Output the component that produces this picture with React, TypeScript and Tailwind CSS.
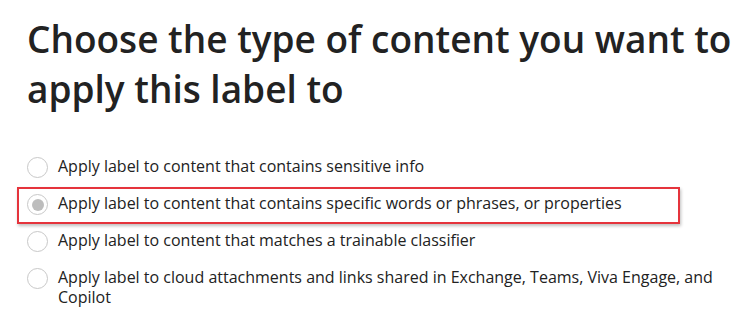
const options = [
  { label: 'Apply label to content that contains sensitive info', checked: false },
  { label: 'Apply label to content that contains specific words or phrases, or properties', checked: true },
  { label: 'Apply label to content that matches a trainable classifier', checked: false },
  {
    label: 'Apply label to cloud attachments and links shared in Exchange, Teams, Viva Engage, and Copilot',
    checked: false,
  },
]

export default function App() {
  return (
    <div
      className="w-[750px] h-[331px] bg-white text-[#222222] overflow-hidden"
      style={{ fontFamily: '"Open Sans", "Noto Sans", sans-serif' }}
    >
      <div className="pl-[27px] pt-[14px]">
        <h1 className="text-[37px] leading-[50px] font-semibold whitespace-nowrap">
          Choose the type of content you want to
          <br />
          apply this label to
        </h1>

        <div className="mt-[36px] w-[706px] flex flex-col">
          {options.map((o) => (
            <div
              key={o.label}
              className={
                o.checked
                  ? '-ml-[10px] w-[663px] h-[37px] pl-[8px] flex items-start pt-[4px] border-2 border-[#e5343c] shadow-[1px_2px_3px_rgba(0,0,0,0.25)]'
                  : 'flex items-start pt-[6px] min-h-[37px]'
              }
            >
              <span className="shrink-0 mt-[1px] w-[21px] h-[21px] rounded-full border border-[#c8c8c8] flex items-center justify-center">
                {o.checked && <span className="w-[12px] h-[12px] rounded-full bg-[#bdbdbd]" />}
              </span>
              <span className="ml-[10px] text-[16px] leading-[20px]">{o.label}</span>
            </div>
          ))}
        </div>
      </div>
    </div>
  )
}
